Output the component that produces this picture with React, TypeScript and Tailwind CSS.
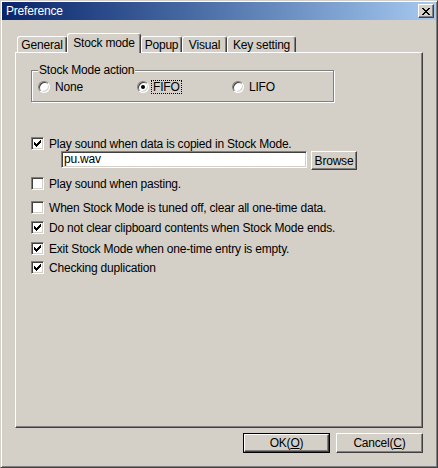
import React from "react";

const raised =
  "border border-t-white border-l-white border-r-[#404040] border-b-[#404040] shadow-[inset_-1px_-1px_#808080]";
const sunken =
  "border border-t-[#808080] border-l-[#808080] border-r-white border-b-white shadow-[inset_1px_1px_#404040,inset_-1px_-1px_#d4d0c8]";

// classic 7x7 check glyph, row by row
const checkRows = ["......x", ".....xx", "x...xxx", "xx.xxx.", "xxxxx..", ".xxx...", "..x...."];

function Check({ on }: { on?: boolean }) {
  return (
    <span className={`flex h-[13px] w-[13px] shrink-0 items-center justify-center bg-white ${sunken}`}>
      {on && (
        <svg width="7" height="7" viewBox="0 0 7 7" shapeRendering="crispEdges">
          {checkRows.map((r, y) =>
            r.split("").map((c, x) => (c === "x" ? <rect key={`${x}-${y}`} x={x} y={y} width="1" height="1" fill="#000" /> : null))
          )}
        </svg>
      )}
    </span>
  );
}

function Radio({ on }: { on?: boolean }) {
  return (
    <span className="flex h-[12px] w-[12px] shrink-0 items-center justify-center rounded-full border border-t-[#808080] border-l-[#808080] border-r-white border-b-white bg-white shadow-[inset_1px_1px_#404040,inset_-1px_-1px_#d4d0c8]">
      {on && <span className="h-[4px] w-[4px] rounded-full bg-black" />}
    </span>
  );
}

function Row({ on, label, className = "" }: { on?: boolean; label: string; className?: string }) {
  return (
    <div className={`flex h-[13px] items-center gap-[5px] ${className}`}>
      <Check on={on} />
      <span className="leading-none">{label}</span>
    </div>
  );
}

const tabs = [
  { name: "General", w: "w-[50px]" },
  { name: "Stock mode", w: "w-[74px]", active: true },
  { name: "Popup", w: "w-[41px]" },
  { name: "Visual", w: "w-[45px]" },
  { name: "Key setting", w: "w-[69px]" },
];

export default function App() {
  return (
    <div
      className="flex h-[468px] w-[438px] flex-col border border-t-[#d4d0c8] border-l-[#d4d0c8] border-r-[#404040] border-b-[#404040] bg-[#d4d0c8] p-px text-[12px] tracking-[-0.2px] text-black shadow-[inset_1px_1px_#fff,inset_-1px_-1px_#808080]"
      style={{ fontFamily: '"Liberation Sans", Arial, sans-serif' }}
    >
      {/* title bar */}
      <div className="flex h-[18px] items-center justify-between bg-linear-to-r from-[#0a246a] to-[#a6caf0] pl-[4px] pr-[2px]">
        <span className="text-[12px] leading-none text-white">Preference</span>
        <span className={`flex h-[14px] w-[16px] items-center justify-center bg-[#d4d0c8] ${raised}`}>
          <svg width="8" height="7" viewBox="0 0 8 7" shapeRendering="crispEdges">
            <path d="M0 0h2v1h1v1h2v-1h1v-1h2v1h-1v1h-1v1h-1v1h1v1h1v1h1v1h-2v-1h-1v-1h-2v1h-1v1h-2v-1h1v-1h1v-1h1v-1h-1v-1h-1v-1h-1z" fill="#000" />
          </svg>
        </span>
      </div>

      <div className="ml-[13px] mt-[13px] flex w-[408px] flex-col">
        {/* tabs */}
        <div className="relative z-10 flex h-[20px] items-end pl-[2px]">
          {tabs.map((t) =>
            t.active ? (
              <div
                key={t.name}
                className={`${t.w} h-[20px] rounded-t-[3px] border border-b-0 border-t-white border-l-white border-r-[#404040] bg-[#d4d0c8] pt-[3px] text-center leading-[13px] shadow-[inset_-1px_0_#808080]`}
              >
                {t.name}
              </div>
            ) : (
              <div
                key={t.name}
                className={`${t.w} mb-px h-[16px] rounded-t-[3px] border border-b-0 border-t-white border-l-white border-r-[#404040] pt-[2px] text-center leading-[13px] shadow-[inset_-1px_0_#808080]`}
              >
                {t.name}
              </div>
            )
          )}
        </div>

        {/* panel */}
        <div className={`-mt-px flex h-[376px] flex-col pl-[15px] ${raised}`}>
          <div className="relative mt-[17px] flex h-[32px] w-[303px] items-center border border-[#808080] pl-[6px] shadow-[inset_1px_1px_#fff,1px_1px_#fff]">
            <span className="absolute -top-[8px] left-[6px] bg-[#d4d0c8] px-[1px] leading-[14px]">Stock Mode action</span>
            <div className="mt-[2px] flex w-[99px] items-center gap-[5px]">
              <Radio />
              <span>None</span>
            </div>
            <div className="mt-[2px] flex w-[95px] items-center gap-[2px]">
              <Radio on />
              <span className="border border-dotted border-black px-[1px] leading-[12px]">FIFO</span>
            </div>
            <div className="mt-[2px] flex items-center gap-[5px]">
              <Radio />
              <span>LIFO</span>
            </div>
          </div>

          <Row on label="Play sound when data is copied in Stock Mode." className="mt-[35px]" />
          <div className="ml-[30px] mt-px flex items-start gap-[4px]">
            <div className={`h-[17px] w-[246px] bg-white pl-[2px] leading-[15px] ${sunken}`}>pu.wav</div>
            <div className={`flex h-[19px] w-[46px] items-center justify-center bg-[#d4d0c8] ${raised}`}>Browse</div>
          </div>
          <Row label="Play sound when pasting." className="mt-[7px]" />
          <Row label="When Stock Mode is tuned off, clear all one-time data." className="mt-[11px]" />
          <Row on label="Do not clear clipboard contents when Stock Mode ends." className="mt-[7px]" />
          <Row on label="Exit Stock Mode when one-time entry is empty." className="mt-[8px]" />
          <Row on label="Checking duplication" className="mt-[6px]" />
        </div>

        {/* buttons */}
        <div className="mt-[5px] flex justify-end gap-[6px]">
          <div className="h-[20px] w-[87px] border border-black">
            <div className={`flex h-full items-center justify-center bg-[#d4d0c8] ${raised}`}>
              OK(<span className="underline">O</span>)
            </div>
          </div>
          <div className={`flex h-[20px] w-[87px] items-center justify-center bg-[#d4d0c8] ${raised}`}>
            Cancel(<span className="underline">C</span>)
          </div>
        </div>
      </div>
    </div>
  );
}
